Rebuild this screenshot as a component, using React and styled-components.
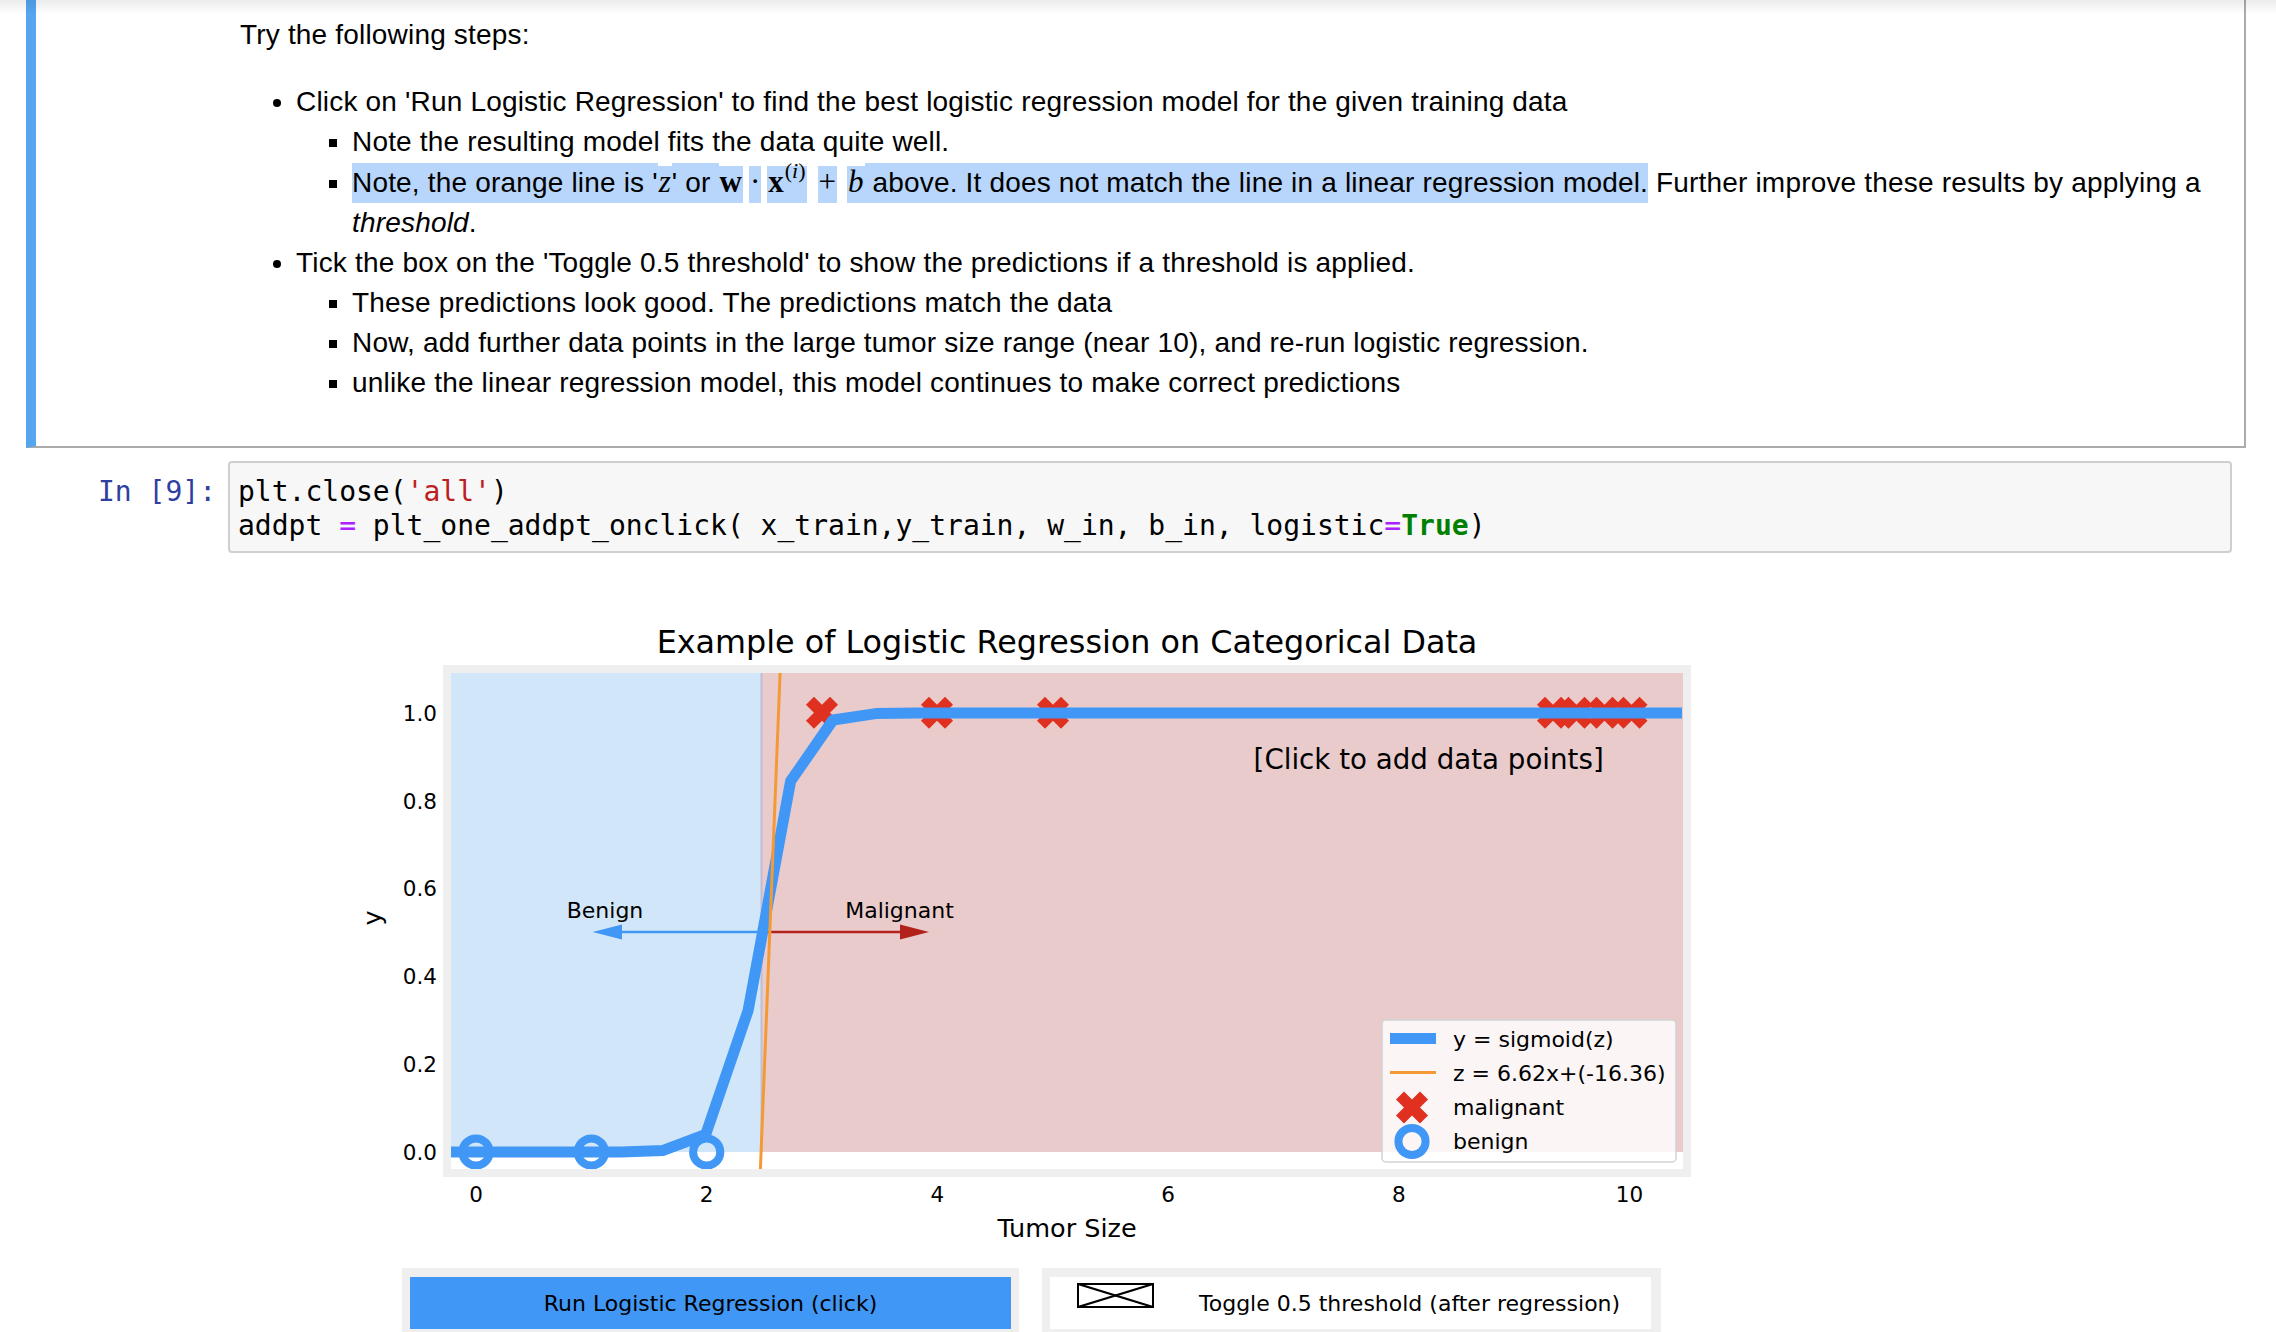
import React from "react";
import styled, { createGlobalStyle } from "styled-components";

const GlobalStyle = createGlobalStyle`
  html, body { margin: 0; padding: 0; background: #ffffff; }
  body { font-family: "Liberation Sans", Arial, sans-serif; color: #000; overflow: hidden; }
`;

const Page = styled.div`
  position: relative;
  width: 2276px;
  height: 1332px;
  overflow: hidden;
  background: #ffffff;
`;

const TopShadow = styled.div`
  position: absolute;
  left: 0;
  right: 0;
  top: 0;
  height: 14px;
  background: linear-gradient(to bottom, rgba(0, 0, 0, 0.08), rgba(0, 0, 0, 0));
  pointer-events: none;
  z-index: 5;
`;

const Notebook = styled.div`
  padding-left: 26px;
  width: 2220px;
`;

const MarkdownCell = styled.div`
  border-left: 10px solid #55a5ef;
  border-right: 2px solid #ababab;
  border-bottom: 2px solid #ababab;
  padding: 15px 14px 15px 204px;
  font-size: 28px;
  line-height: 40px;
  letter-spacing: 0.18px;
  color: #000;
`;

const Para = styled.p`
  margin: 0 0 27px 0;
`;

const List = styled.ul`
  margin: 0 0 28px 0;
  padding-left: 56px;
  list-style: disc;
`;

const SubList = styled.ul`
  margin: 0;
  padding-left: 56px;
  list-style: square;
`;

const Sel = styled.span`
  background: #b8d6fb;
  padding: 4px 0 5px 0;
`;

const MathSel = styled.span`
  background: #b8d6fb;
  padding: 1px 1px 5px 1px;
  margin: 0 ${(p) => p.$gap || 0}px 0 ${(p) => (p.$gapL ?? p.$gap) || 0}px;
  letter-spacing: 0;
`;

const MathI = styled.span`
  font-family: "Liberation Serif", "DejaVu Serif", serif;
  font-style: italic;
  font-size: 31px;
`;

const MathB = styled.span`
  font-family: "Liberation Serif", "DejaVu Serif", serif;
  font-weight: bold;
  font-size: 31px;
`;

const MathR = styled.span`
  font-family: "Liberation Serif", "DejaVu Serif", serif;
  font-size: 31px;
`;

const Sup = styled.span`
  font-family: "Liberation Serif", "DejaVu Serif", serif;
  font-size: 22px;
  position: relative;
  top: -14px;
  line-height: 0;
  margin-left: 1px;
`;

const CodeCell = styled.div`
  display: flex;
  align-items: flex-start;
  margin-top: 13px;
`;

const Prompt = styled.div`
  width: 202px;
  box-sizing: border-box;
  padding: 14px 12px 0 0;
  text-align: right;
  font-family: "DejaVu Sans Mono", "Liberation Mono", monospace;
  font-size: 28px;
  line-height: 34px;
  color: #303f9f;
`;

const CodeBox = styled.div`
  width: 2004px;
  box-sizing: border-box;
  border: 2px solid #cfcfcf;
  border-radius: 4px;
  background: #f7f7f7;
  padding: 12px 8px 8px 8px;
  font-family: "DejaVu Sans Mono", "Liberation Mono", monospace;
  font-size: 28px;
  line-height: 34px;
  color: #000;
`;

const CodeLine = styled.div`
  white-space: pre;
`;

const Tok = styled.span`
  color: ${(p) => p.$c};
  font-weight: ${(p) => (p.$b ? "bold" : "normal")};
`;

const Output = styled.div`
  margin-top: 28px;
  padding-left: 202px;
`;

const ChartSvg = styled.svg`
  display: block;
  font-family: "DejaVu Sans", sans-serif;
`;

const WidgetRow = styled.div`
  display: flex;
  gap: 23px;
  margin-left: 174px;
`;

const WidgetFrame = styled.div`
  width: ${(p) => p.$w}px;
  box-sizing: border-box;
  background: #efefef;
  padding: 9px ${(p) => p.$pr}px 8px 8px;
`;

const RunButton = styled.div`
  height: 52px;
  background: #4197f5;
  display: flex;
  align-items: center;
  justify-content: center;
  font-family: "DejaVu Sans", sans-serif;
  font-size: 22px;
  color: #000;
`;

const CheckWidget = styled.div`
  height: 52px;
  background: #ffffff;
  display: flex;
  align-items: center;
  padding-left: 27px;
  font-family: "DejaVu Sans", sans-serif;
  font-size: 22px;
  color: #000;
`;

const CheckBox = styled.svg`
  align-self: flex-start;
  margin-top: 6px;
  flex: none;
`;

const CheckLabel = styled.span`
  margin-left: 45px;
`;

/* ---------- chart helpers ---------- */
const px = (x) => 476 + 115.35 * x;
const py = (y) => 1151 - 439 * y;
const sig = (z) => 1 / (1 + Math.exp(-z));

const BLUE = "#4197f5";
const RED = "#e0301f";
const ORANGE = "#f39a37";

const plusPts = [
  [-1, -3], [-1, -1], [-3, -1], [-3, 1], [-1, 1], [-1, 3],
  [1, 3], [1, 1], [3, 1], [3, -1], [1, -1], [1, -3],
];

function XMark({ cx, cy, u = 5.66 }) {
  const pts = plusPts.map(([a, b]) => `${a * u},${b * u}`).join(" ");
  return <polygon points={pts} fill={RED} transform={`translate(${cx} ${cy}) rotate(45)`} />;
}

function Chart() {
  const xs = Array.from({ length: 30 }, (_, i) => -0.217 + i * 0.368);
  const sigPts = xs.map((x) => `${px(x).toFixed(1)},${py(sig(6.62 * x - 16.36)).toFixed(1)}`).join(" ");
  const yTicks = [0, 0.2, 0.4, 0.6, 0.8, 1.0];
  const xTicks = [0, 2, 4, 6, 8, 10];
  const malX = [822, 937, 1053, 1553, 1576.5, 1604.5, 1631.5];
  const benX = [0, 1, 2];
  return (
    <ChartSvg width="1600" height="687" viewBox="228 580 1600 687">
      <defs>
        <clipPath id="axclip">
          <rect x="451" y="672" width="1232" height="496" />
        </clipPath>
      </defs>
      <text x="1067" y="652" fontSize="31.8" textAnchor="middle" fill="#000">
        Example of Logistic Regression on Categorical Data
      </text>

      <rect x="443" y="664" width="1248" height="512" fill="#efefef" />
      <rect x="451" y="672" width="1232" height="496" fill="#ffffff" />
      <rect x="451" y="672" width="310.5" height="479" fill="#d1e7f9" />
      <rect x="761.5" y="672" width="921.5" height="479" fill="#e9cbcc" />
      <line x1="761.5" y1="672" x2="761.5" y2="1151" stroke="#c2bdd0" strokeWidth="2" />

      <text x="1253.6" y="768" fontSize="27.7" fill="#000">[Click to add data points]</text>

      <line x1="760" y1="931" x2="620" y2="931" stroke={BLUE} strokeWidth="2.5" />
      <polygon points="592.6,931 622,923.5 622,938.5" fill={BLUE} />
      <line x1="763" y1="931" x2="902" y2="931" stroke="#b3221a" strokeWidth="2.5" />
      <polygon points="929,931 900,923.5 900,938.5" fill="#b3221a" />
      <text x="605" y="917" fontSize="22" textAnchor="middle" fill="#000">Benign</text>
      <text x="899.5" y="917" fontSize="22" textAnchor="middle" fill="#000">Malignant</text>

      <g clipPath="url(#axclip)">
        {malX.map((cx) => (
          <XMark key={cx} cx={cx} cy={711.7} />
        ))}
        <polyline points={sigPts} fill="none" stroke={BLUE} strokeWidth="11" strokeLinejoin="round" />
        <line x1="760.4" y1="1168" x2="780.1" y2="672" stroke={ORANGE} strokeWidth="3" />
        {benX.map((x) => (
          <circle key={x} cx={px(x)} cy={1151} r="13.6" fill="none" stroke={BLUE} strokeWidth="8" />
        ))}
      </g>

      {yTicks.map((v) => (
        <text key={v} x="437" y={py(v) + 7.8} fontSize="21.5" textAnchor="end" fill="#000">
          {v.toFixed(1)}
        </text>
      ))}
      {xTicks.map((v) => (
        <text key={v} x={px(v)} y="1200.5" fontSize="21.5" textAnchor="middle" fill="#000">
          {v}
        </text>
      ))}
      <text x="1067" y="1236" fontSize="25.5" textAnchor="middle" fill="#000">Tumor Size</text>
      <text
        x="0"
        y="0"
        fontSize="25.5"
        textAnchor="middle"
        fill="#000"
        transform="translate(380.5 917) rotate(-90)"
      >
        y
      </text>

      <rect x="1382" y="1019" width="294" height="142" rx="4" fill="#ffffff" fillOpacity="0.8" stroke="#d2d2d2" strokeWidth="1.5" />
      <line x1="1390" y1="1037.5" x2="1436" y2="1037.5" stroke={BLUE} strokeWidth="11" />
      <text x="1453" y="1045.5" fontSize="22" fill="#000">y = sigmoid(z)</text>
      <line x1="1390" y1="1071.5" x2="1436" y2="1071.5" stroke={ORANGE} strokeWidth="3" />
      <text x="1453" y="1079.5" fontSize="22" fill="#000">z = 6.62x+(-16.36)</text>
      <XMark cx={1412} cy={1106.5} />
      <text x="1453" y="1114" fontSize="22" fill="#000">malignant</text>
      <circle cx="1412" cy="1140.5" r="13.6" fill="none" stroke={BLUE} strokeWidth="8" />
      <text x="1453" y="1148" fontSize="22" fill="#000">benign</text>
    </ChartSvg>
  );
}

export default function App() {
  return (
    <Page>
      <GlobalStyle />
      <TopShadow />
      <Notebook>
        <MarkdownCell>
          <Para>Try the following steps:</Para>
          <List>
            <li>
              Click on 'Run Logistic Regression' to find the best logistic regression model for the given training data
              <SubList>
                <li>Note the resulting model fits the data quite well.</li>
                <li>
                  <Sel>Note, the orange line is '</Sel>
                  <MathSel>
                    <MathI>z</MathI>
                  </MathSel>
                  <Sel>' or </Sel>
                  <MathSel>
                    <MathB>w</MathB>
                  </MathSel>
                  <MathSel $gap={6}>
                    <MathR>·</MathR>
                  </MathSel>
                  <MathSel>
                    <MathB>x</MathB>
                    <Sup>
                      (<i>i</i>)
                    </Sup>
                  </MathSel>
                  <MathSel $gap={10} $gapL={11}>
                    <MathR>+</MathR>
                  </MathSel>
                  <MathSel>
                    <MathI>b</MathI>
                  </MathSel>
                  <Sel> above. It does not match the line in a linear regression model.</Sel> Further improve these
                  results by applying a <em>threshold</em>.
                </li>
              </SubList>
            </li>
            <li>
              Tick the box on the 'Toggle 0.5 threshold' to show the predictions if a threshold is applied.
              <SubList>
                <li>These predictions look good. The predictions match the data</li>
                <li>Now, add further data points in the large tumor size range (near 10), and re-run logistic regression.</li>
                <li>unlike the linear regression model, this model continues to make correct predictions</li>
              </SubList>
            </li>
          </List>
        </MarkdownCell>

        <CodeCell>
          <Prompt>In [9]:</Prompt>
          <CodeBox>
            <CodeLine>
              {"plt.close("}
              <Tok $c="#ba2121">'all'</Tok>
              {")"}
            </CodeLine>
            <CodeLine>
              {"addpt "}
              <Tok $c="#aa22ff">=</Tok>
              {" plt_one_addpt_onclick( x_train,y_train, w_in, b_in, logistic"}
              <Tok $c="#aa22ff">=</Tok>
              <Tok $c="#008000" $b>
                True
              </Tok>
              {")"}
            </CodeLine>
          </CodeBox>
        </CodeCell>

        <Output>
          <Chart />
          <WidgetRow>
            <WidgetFrame $w={617} $pr={8}>
              <RunButton>Run Logistic Regression (click)</RunButton>
            </WidgetFrame>
            <WidgetFrame $w={619} $pr={10}>
              <CheckWidget>
                <CheckBox width="77" height="25" viewBox="0 0 77 25">
                  <rect x="1" y="1" width="75" height="23" fill="#fff" stroke="#000" strokeWidth="2" />
                  <line x1="1" y1="1" x2="76" y2="24" stroke="#000" strokeWidth="2.2" />
                  <line x1="1" y1="24" x2="76" y2="1" stroke="#000" strokeWidth="2.2" />
                </CheckBox>
                <CheckLabel>Toggle 0.5 threshold (after regression)</CheckLabel>
              </CheckWidget>
            </WidgetFrame>
          </WidgetRow>
        </Output>
      </Notebook>
    </Page>
  );
}
